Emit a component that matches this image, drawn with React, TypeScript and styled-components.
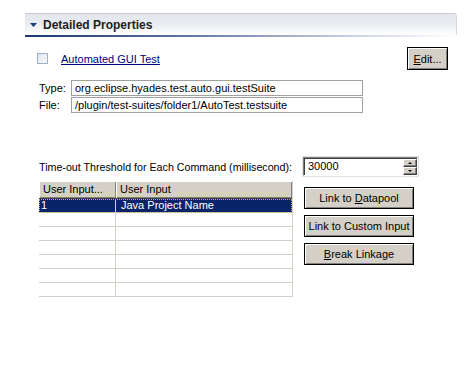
import React from 'react'
import styled, { createGlobalStyle } from 'styled-components'

const GlobalStyle = createGlobalStyle`
  html, body {
    margin: 0;
    padding: 0;
    background: #ffffff;
  }
  body {
    font-family: "Liberation Sans", Arial, sans-serif;
    font-size: 11px;
    color: #000000;
  }
`

const Page = styled.div`
  width: 466px;
  height: 372px;
  padding: 13px 0 0 25px;
  box-sizing: border-box;
`

const Section = styled.div`
  width: 432px;
`

const Header = styled.div`
  height: 22px;
  display: flex;
  align-items: center;
  gap: 6px;
  padding-left: 5px;
  box-sizing: border-box;
  border-top: 1px solid #c9ccd2;
  border-right: 1px solid #d6d9de;
  border-top-right-radius: 3px;
  background: linear-gradient(to bottom, #e3e7ed 0%, #e8ebf0 45%, #ffffff 100%);
`

const HeaderLine = styled.div`
  height: 2px;
  background: linear-gradient(to right, #1a3772 0%, #5a6fa0 35%, #c9cfe3 75%, #ffffff 100%);
`

const Title = styled.span`
  font-weight: bold;
  font-size: 12px;
  color: #1e1e1e;
`

const Body = styled.div`
  display: flex;
  flex-direction: column;
  padding: 10px 9px 0 12px;
`

const TopRow = styled.div`
  display: flex;
  align-items: center;
  height: 23px;
`

const CheckBox = styled.span`
  width: 9px;
  height: 9px;
  border: 1px solid #9fb0c8;
  background: linear-gradient(135deg, #dfe6ef 0%, #f7f9fb 100%);
  margin-right: 13px;
`

const Link = styled.a`
  color: #000080;
  text-decoration: underline;
  margin-top: 1px;
  flex: 1;
`

const Button = styled.button<{ $width: number }>`
  width: ${p => p.$width}px;
  height: 22px;
  padding: 0;
  font-family: "Liberation Sans", Arial, sans-serif;
  font-size: 11px;
  color: #000;
  background: #d4d0c8;
  border: 1px solid #000;
  box-shadow: inset 1px 1px 0 #ffffff, inset -1px -1px 0 #808080;
  text-align: center;
  cursor: default;
`

const EditButton = styled(Button)`
  height: 23px;
`

const Fields = styled.div`
  display: flex;
  flex-direction: column;
  gap: 1px;
  margin: 10px 0 0 2px;
`

const FieldRow = styled.div`
  display: flex;
  align-items: center;
`

const Label = styled.span`
  width: 32px;
`

const TextField = styled.div`
  width: 292px;
  height: 16px;
  box-sizing: border-box;
  border: 1px solid #a0a0a0;
  padding-left: 3px;
  line-height: 14px;
  white-space: nowrap;
  overflow: hidden;
`

const TimeoutRow = styled.div`
  display: flex;
  align-items: center;
  margin: 44px 0 0 2px;
  height: 19px;
`

const TimeoutLabel = styled.span`
  width: 264px;
  font-size: 10.7px;
`

const Spinner = styled.div`
  width: 115px;
  height: 19px;
  box-sizing: border-box;
  display: flex;
  border-top: 1px solid #808080;
  border-left: 1px solid #808080;
  border-right: 1px solid #ffffff;
  border-bottom: 1px solid #ffffff;
  box-shadow: inset 1px 1px 0 #404040, 0 0 0 1px #e0e0e0;
  background: #fff;
`

const SpinValue = styled.span`
  flex: 1;
  padding: 2px 0 0 4px;
`

const SpinButtons = styled.div`
  width: 14px;
  display: flex;
  flex-direction: column;
  padding: 1px 0 0 0;
`

const SpinButton = styled.div<{ $down?: boolean }>`
  flex: 1;
  background: #d4d0c8;
  border-top: 1px solid #ffffff;
  border-left: 1px solid #ffffff;
  border-right: 1px solid #404040;
  border-bottom: 1px solid #404040;
  box-shadow: inset -1px -1px 0 #808080;
  display: flex;
  align-items: center;
  justify-content: center;
  &::after {
    content: '';
    border-left: 2px solid transparent;
    border-right: 2px solid transparent;
    ${p => (p.$down ? 'border-top: 2px solid #000;' : 'border-bottom: 2px solid #000;')}
  }
`

const LowerRow = styled.div`
  display: flex;
  align-items: flex-start;
  margin: 5px 0 0 2px;
`

const Table = styled.div`
  width: 254px;
  height: 116px;
  display: flex;
  flex-direction: column;
  border-right: 1px solid #d4d0c8;
  box-sizing: border-box;
`

const HeadRow = styled.div`
  display: grid;
  grid-template-columns: 77px 1fr;
  height: 18px;
`

const HeadCell = styled.div`
  background: #d4d0c8;
  box-shadow: inset 1px 1px 0 #ffffff, inset -1px -1px 0 #808080;
  border-bottom: 1px solid #404040;
  box-sizing: border-box;
  padding: 2px 0 0 4px;
  white-space: nowrap;
`

const Row = styled.div<{ $selected?: boolean }>`
  display: grid;
  grid-template-columns: 77px 1fr;
  height: 14px;
  box-sizing: border-box;
  border-bottom: 1px solid #d4d0c8;
  background: ${p => (p.$selected ? '#0a246a' : 'transparent')};
  color: ${p => (p.$selected ? '#ffffff' : '#000')};
  outline: ${p => (p.$selected ? '1px dotted #c8b060' : 'none')};
  outline-offset: -1px;
  line-height: 13px;
`

const Cell = styled.div<{ $first?: boolean }>`
  padding-left: ${p => (p.$first ? 2 : 5)}px;
  border-right: ${p => (p.$first ? '1px solid #d4d0c8' : 'none')};
  white-space: nowrap;
`

const Actions = styled.div`
  display: flex;
  flex-direction: column;
  gap: 6px;
  margin: 6px 0 0 11px;
`

const rows = [
  { key: '1', value: 'Java Project Name' },
  { key: '', value: '' },
  { key: '', value: '' },
  { key: '', value: '' },
  { key: '', value: '' },
  { key: '', value: '' },
]

const App = () => (
  <Page>
    <GlobalStyle />
    <Section>
      <Header>
        <svg width="7" height="4" viewBox="0 0 7 4">
          <path d="M0 0 H7 L3.5 4 Z" fill="#1c3a72" />
        </svg>
        <Title>Detailed Properties</Title>
      </Header>
      <HeaderLine />
      <Body>
        <TopRow>
          <CheckBox />
          <Link href="#">Automated GUI Test</Link>
          <EditButton $width={41}><u>E</u>dit...</EditButton>
        </TopRow>
        <Fields>
          <FieldRow>
            <Label>Type:</Label>
            <TextField>org.eclipse.hyades.test.auto.gui.testSuite</TextField>
          </FieldRow>
          <FieldRow>
            <Label>File:</Label>
            <TextField>/plugin/test-suites/folder1/AutoTest.testsuite</TextField>
          </FieldRow>
        </Fields>
        <TimeoutRow>
          <TimeoutLabel>Time-out Threshold for Each Command (millisecond):</TimeoutLabel>
          <Spinner>
            <SpinValue>30000</SpinValue>
            <SpinButtons>
              <SpinButton />
              <SpinButton $down />
            </SpinButtons>
          </Spinner>
        </TimeoutRow>
        <LowerRow>
          <Table>
            <HeadRow>
              <HeadCell>User Input...</HeadCell>
              <HeadCell>User Input</HeadCell>
            </HeadRow>
            {rows.map((r, i) => (
              <Row key={i} $selected={i === 0}>
                <Cell $first>{r.key}</Cell>
                <Cell>{r.value}</Cell>
              </Row>
            ))}
            <Row>
              <Cell $first />
              <Cell />
            </Row>
          </Table>
          <Actions>
            <Button $width={110}>Link to <u>D</u>atapool</Button>
            <Button $width={110}>Link to Custom Input</Button>
            <Button $width={110}><u>B</u>reak Linkage</Button>
          </Actions>
        </LowerRow>
      </Body>
    </Section>
  </Page>
)

export default App
